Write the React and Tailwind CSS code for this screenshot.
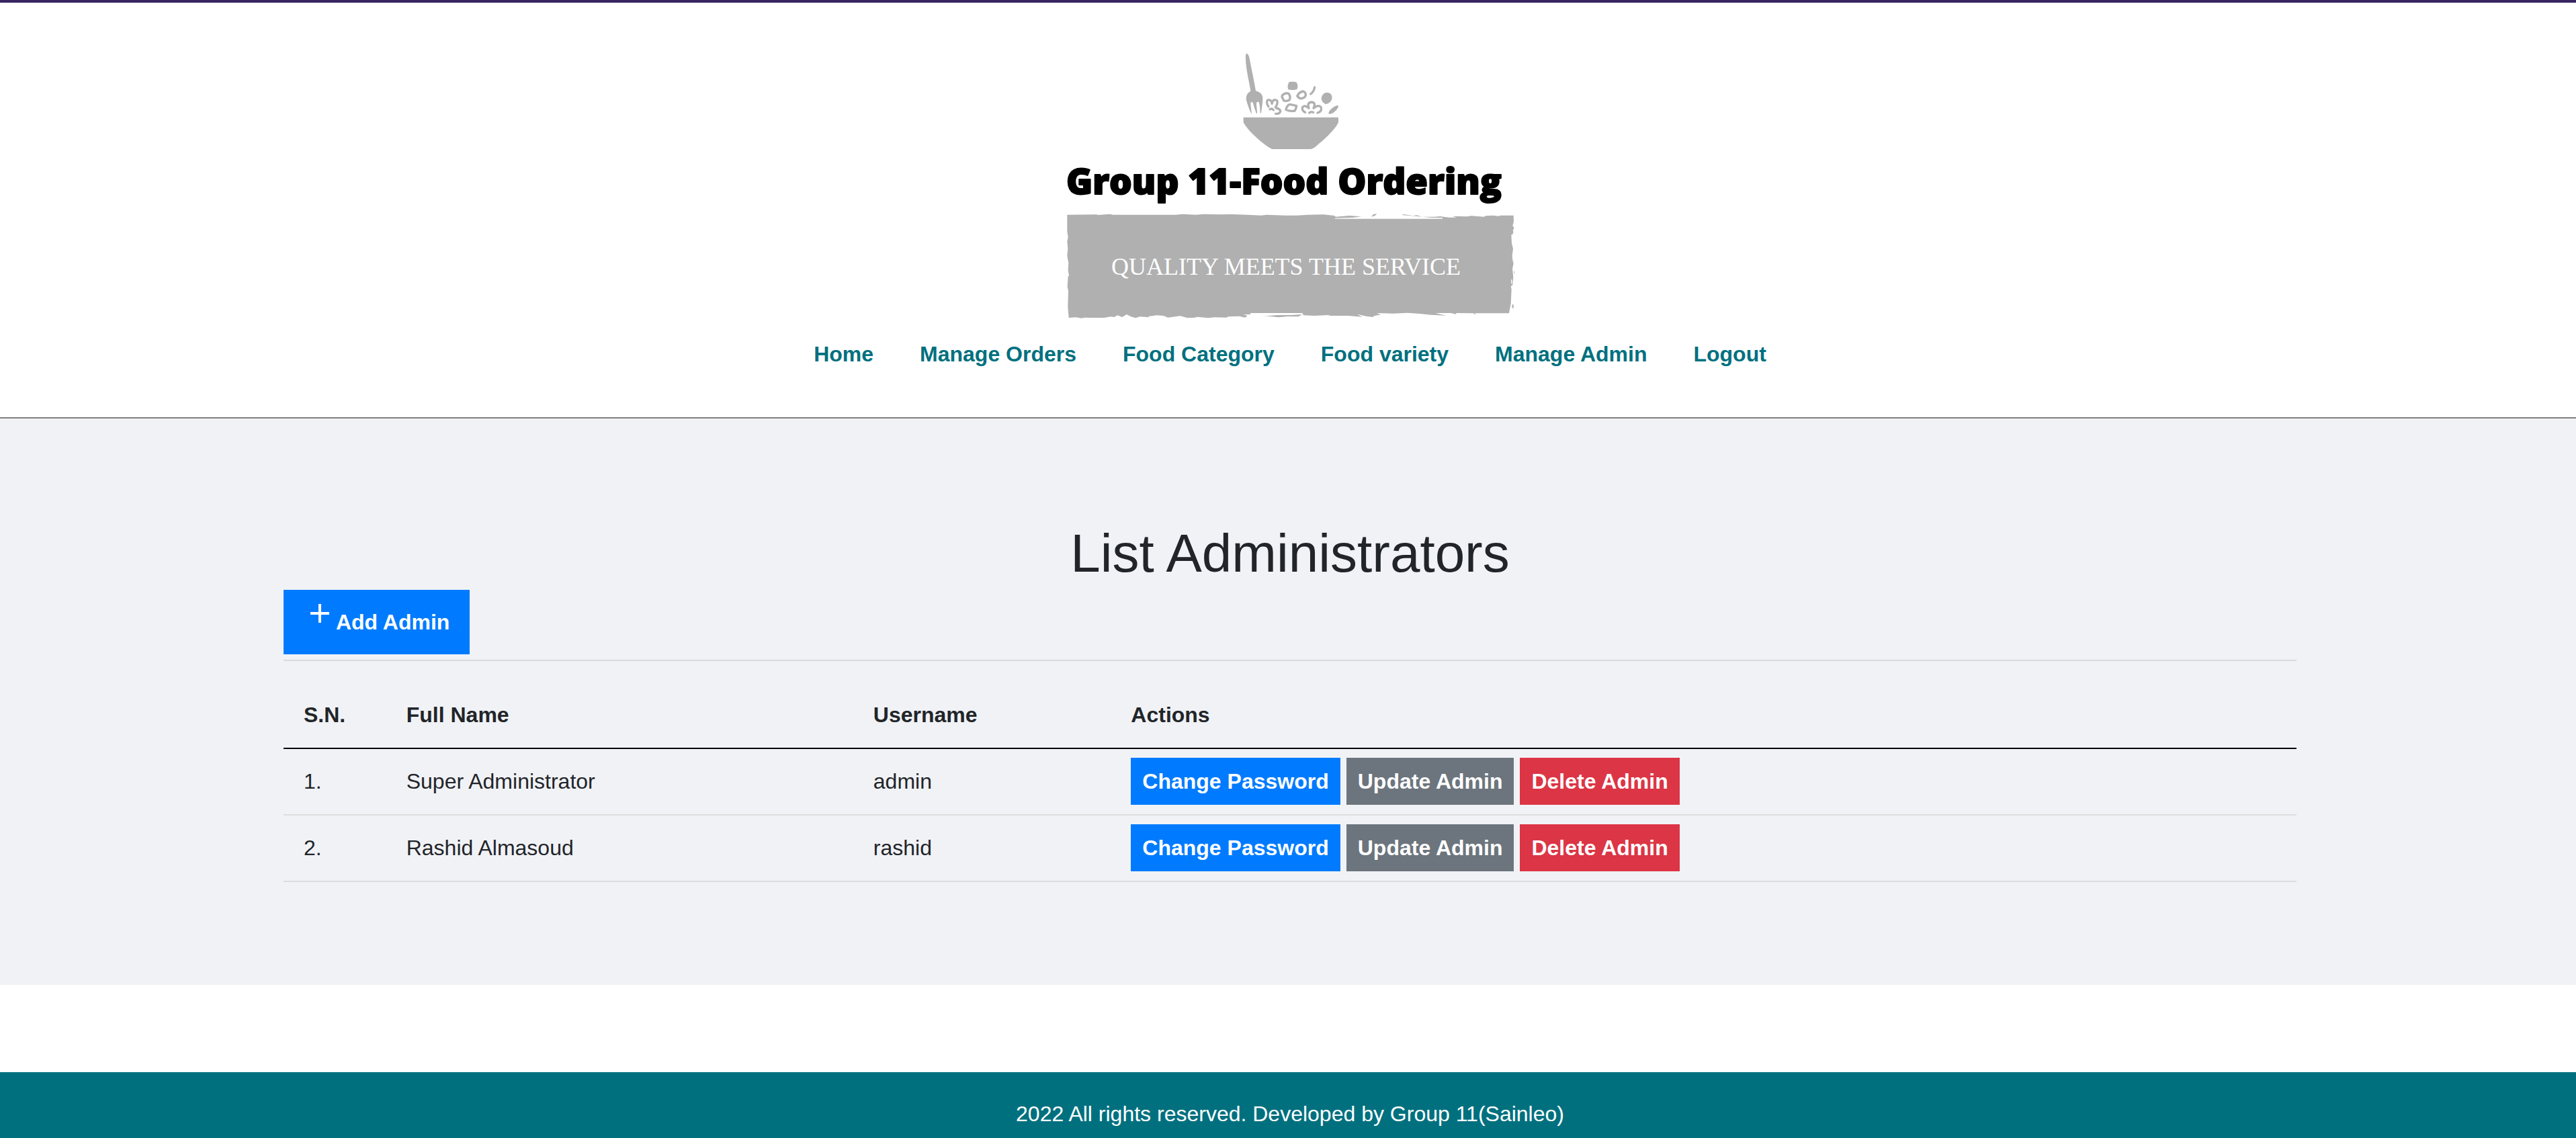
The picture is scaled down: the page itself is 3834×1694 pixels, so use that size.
const navItems = ['Home', 'Manage Orders', 'Food Category', 'Food variety', 'Manage Admin', 'Logout'];

const admins = [
  { id: 1, name: 'Super Administrator', username: 'admin' },
  { id: 2, name: 'Rashid Almasoud', username: 'rashid' },
];

function Logo() {
  return (
    <svg width="680" height="420" viewBox="0 0 680 420" role="img" aria-label="Group 11-Food Ordering">
      {/* Fork, vegetables and bowl */}
      <g transform="translate(240 0) scale(0.33333)" fill="#b0b0b0">
        <path d="M107 59 C113 60 117 70 119 80 C127 125 140 180 147 226 C162 229 176 240 178 254 C179 276 174 300 171 326 L167 324 C166 308 166 293 161 276 C155 272 150 276 150 284 C151 298 153 312 153 327 L150 327 C144 312 139 297 135 281 C131 272 124 274 124 283 C125 300 128 314 129 329 C121 318 112 292 105 268 C102 248 110 234 124 227 C117 180 103 130 102 80 C101 66 103 60 107 59 Z" />
        <path d="M92 344 H516 V366 C506 394 450 446 422 468 Q404 486 388 486 H220 Q206 480 190 467 C150 438 104 392 92 366 Z" />
        <path d="M296 186 Q312 182 328 187 Q340 204 330 220 Q312 224 292 220 Q286 202 296 186 Z" />
        <path d="M464 233 C482 233 490 246 487 262 C482 276 470 285 459 285 C448 280 440 270 440 258 C442 244 452 234 464 233 Z" />
        <path d="M472 325 C474 312 494 296 510 291 Q517 290 516 297 C508 312 494 328 478 329 Q472 329 472 325 Z" />
        <g fill="none" stroke="#b0b0b0" strokeWidth="10" strokeLinecap="round" strokeLinejoin="round">
          <path d="M265 246 Q280 232 294 238 Q304 252 298 266 Q285 274 272 269 Q268 257 264 254 Z" />
          <path d="M334 247 Q342 229 360 228 Q372 234 370 247 Q364 259 350 260 Q338 259 332 248 Z" />
          <path d="M291 291 Q298 284 304 287 Q318 290 329 293 Q328 304 321 315 Q302 319 282 310 Q284 298 291 291 Z" />
          <path d="M410 210 Q406 230 392 240" />
          <path d="M204 296 C194 284 195 266 205 266 C213 266 218 272 219 283 C222 268 228 264 238 267 C248 272 244 286 235 299" />
          <path d="M210 308 Q219 303 226 311" />
          <path d="M239 303 Q256 306 257 317 Q254 330 236 328" />
          <path d="M368 322 C352 314 352 300 360 295 C367 291 374 294 384 303 C376 286 384 276 397 276 C411 278 413 288 405 303 C416 292 430 290 438 298 C443 310 438 320 423 324" />
          <path d="M386 324 Q394 317 404 322" />
        </g>
      </g>

      <text
        x="7" y="229"
        className="font-['Open_Sans'] text-[53px] font-extrabold"
        fill="#000" stroke="#000" strokeWidth="2" strokeLinejoin="round"
      >
        Group 11-Food Ordering
      </text>

      {/* Brushed banner */}
      <g transform="translate(0 250) scale(0.33333)" fill="#b0b0b0">
        <path d="M25 29 L156 28 L163 30 L216 26 L230 29 L510 29 L540 26 L600 29 L636 26 L700 28 L760 27 L830 29 L890 32 L915 29 L1000 32 L1050 32 L1100 29 L1170 28 L1218 33 L1224 38 L1285 33 L1339 37 L1300 42 L1222 44 L1220 47 H1701 V43 L1650 42 L1596 37 L1518 30 L1528 27 L1570 34 L1585 31 L1610 38 L1665 38 L1690 36 L1730 41 L1764 41 L1745 35 L1810 37 L1830 34 L1885 38 L1895 34 L1925 32 L1950 35 L1960 32 L2018 32 L2019 60 L2014 78 L2021 88 L2015 99 L2018 106 L2012 119 L2008 116 L2010 157 L2016 180 L2012 212 L2014 232 L2018 246 L2013 271 L2017 307 L2014 343 L2006 348 L2009 362 L2006 425 L1998 469 H1846 L1850 476 L1838 469 L1764 468 L1759 473 L1740 468 L1668 468 L1718 479 L1650 476 L1600 471 L1545 467 L1480 470 L1407 468 L1426 475 L1395 481 L1390 486 L1360 482 L1320 473 L1342 485 L1280 480 L1200 480 L1190 477 L1130 480 L1080 478 L1075 468 H842 L845 474 L812 474 L830 480 L820 488 L793 482 L745 484 L735 488 L683 487 L655 490 L607 485 L590 489 L560 489 L530 481 L475 488 L455 480 L425 478 L388 483 L390 487 L350 484 L330 490 L310 484 L290 474 L280 481 L270 486 L250 478 L235 486 L220 484 L190 489 L130 489 L104 488 L88 491 L65 487 L32 489 L28 440 L30 370 L26 350 L29 304 L33 302 L29 275 L31 245 L25 212 L28 180 L25 150 L29 128 L25 105 Z" />
        <path d="M860 482 L910 482 L960 477 L1025 477 L1075 474 L1058 484 L1010 483 L970 487 L930 483 Z" />
        <path d="M1383 38 L1392 27 L1408 25 L1400 33 Z" />
        <path d="M2012 430 L2018 430 V448 L2011 443 Z" />
        <path d="M2020 280 L2024 285 L2021 294 Z" />
        <path d="M860 479 L935 475 L870 486 Z" fill="#fff" />
        <path d="M2007 318 L2011 318 L2012 334 L2008 338 Z" fill="#fff" />
      </g>

      <text x="74" y="349" className="font-['Liberation_Serif'] text-[36px]" fill="#fff">
        QUALITY MEETS THE SERVICE
      </text>
    </svg>
  );
}

function PlusIcon() {
  return (
    <svg width="48" height="48" viewBox="0 0 48 48" fill="none" stroke="currentColor" strokeWidth="4" aria-hidden="true">
      <path d="M24 10v28M10 24h28" />
    </svg>
  );
}

function ActionButton({ className, children }) {
  return (
    <button type="button" className={`cursor-pointer p-[17px] leading-9 font-bold whitespace-nowrap text-white ${className}`}>
      {children}
    </button>
  );
}

export default function App() {
  return (
    <div className="bg-white font-['Liberation_Sans',Arial,sans-serif] text-[32px] leading-[48px] text-[#212529]">
      <header className="flex flex-col items-center border-t-4 border-b-2 border-t-[#35265f] border-b-[#808080] pt-14 pb-[70px] pl-1.5">
        <Logo />
        <nav className="mt-[23px]">
          <ul className="flex flex-wrap justify-center gap-x-[69px]">
            {navItems.map((item) => (
              <li key={item}>
                <a href="#" className="font-bold text-[#00707f]">{item}</a>
              </li>
            ))}
          </ul>
        </nav>
      </header>

      <main className="bg-[#f1f2f6] py-[153px] pl-1.5">
        <div className="mx-auto w-[78.27%]">
          <h1 className="mb-1.5 text-center text-[80px] leading-[96px]">List Administrators</h1>
          <button
            type="button"
            className="flex cursor-pointer items-baseline bg-[#007bff] px-[30px] pt-[11px] pb-[30px] leading-9 font-bold text-white"
          >
            <PlusIcon />
            Add Admin
          </button>
          <hr className="mt-2 mb-[31px] border-t-2 border-[#d8d9dd]" />
          <table className="w-full table-fixed border-separate border-spacing-0 text-left">
            <thead>
              <tr className="*:border-b-2 *:border-black *:px-[30px] *:py-[25px]">
                <th scope="col" className="w-[5.1%]">S.N.</th>
                <th scope="col" className="w-[23.2%]">Full Name</th>
                <th scope="col" className="w-[12.8%]">Username</th>
                <th scope="col">Actions</th>
              </tr>
            </thead>
            <tbody>
              {admins.map((admin) => (
                <tr key={admin.id} className="*:border-b-2 *:border-[#dcdedd] *:px-[30px] *:pt-[13px] *:pb-[14px]">
                  <td>{admin.id}.</td>
                  <td>{admin.name}</td>
                  <td>{admin.username}</td>
                  <td>
                    <div className="flex gap-[9px]">
                      <ActionButton className="bg-[#007bff]">Change Password</ActionButton>
                      <ActionButton className="bg-[#6c757d]">Update Admin</ActionButton>
                      <ActionButton className="bg-[#dc3545]">Delete Admin</ActionButton>
                    </div>
                  </td>
                </tr>
              ))}
            </tbody>
          </table>
        </div>
      </main>

      <footer className="mt-[130px] bg-[#00707f] pt-[38px] pb-3 pl-1.5 text-center text-white">
        <p>2022 All rights reserved. Developed by Group 11(Sainleo)</p>
      </footer>
    </div>
  );
}
